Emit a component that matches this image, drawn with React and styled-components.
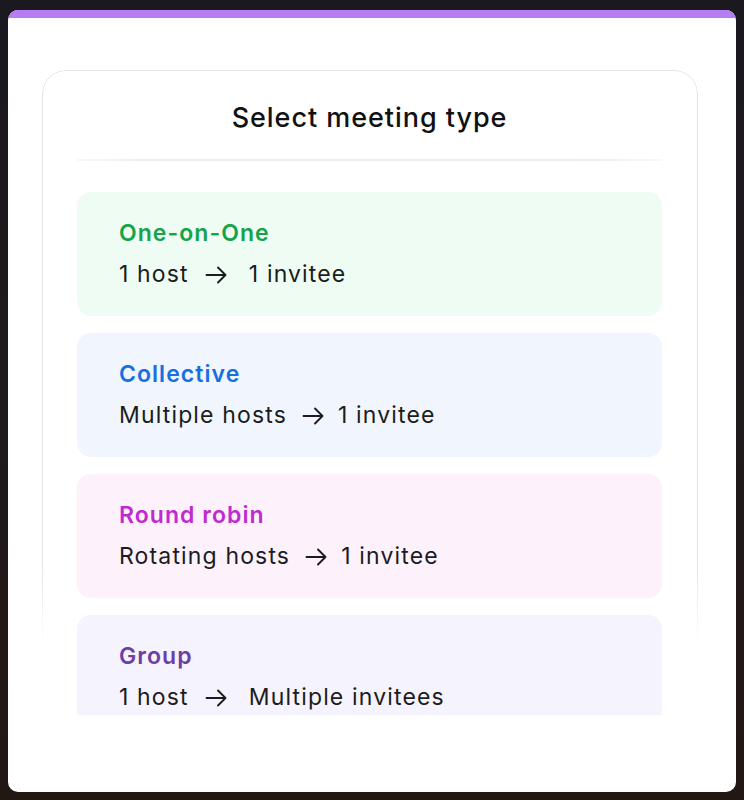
import React from "react";
import styled, { createGlobalStyle } from "styled-components";

const Global = createGlobalStyle`
  html, body { margin: 0; padding: 0; }
  body {
    font-family: Inter, "Noto Sans", sans-serif;
    background: linear-gradient(180deg, #1c1820 0%, #1f1a1c 50%, #231714 100%);
    min-height: 800px;
    -webkit-font-smoothing: antialiased;
  }
  * { box-sizing: border-box; }
`;

const Frame = styled.div`
  padding: 10px 8px 8px 8px;
  height: 800px;
  display: flex;
`;

const Panel = styled.div`
  flex: 1;
  background: #ffffff;
  border-radius: 10px;
  overflow: hidden;
  display: flex;
  flex-direction: column;
`;

const TopBar = styled.div`
  height: 8px;
  background: #b57cf4;
  flex: none;
`;

const Body = styled.div`
  padding: 52px 38px 0 34px;
`;

const Card = styled.div`
  position: relative;
  height: 645px;
  overflow: hidden;
  padding: 0 36px 0 35px;
  &::before {
    content: "";
    position: absolute;
    inset: 0 0 -40px 0;
    border: 1.5px solid #e3e3e3;
    border-radius: 24px;
    pointer-events: none;
    -webkit-mask-image: linear-gradient(180deg, #000 0%, #000 72%, transparent 84%);
    mask-image: linear-gradient(180deg, #000 0%, #000 72%, transparent 84%);
  }
`;

const Title = styled.h1`
  margin: 0;
  padding-top: 32px;
  font-size: 27px;
  line-height: 32px;
  font-weight: 500;
  letter-spacing: 0.95px;
  color: #111111;
  text-align: center;
`;

const Divider = styled.div`
  margin-top: 25px;
  height: 2px;
  background: linear-gradient(90deg, rgba(232,232,232,0.3) 0%, #ececec 15%, #ececec 85%, rgba(232,232,232,0.3) 100%);
`;

const List = styled.div`
  margin-top: 31px;
  display: flex;
  flex-direction: column;
  gap: 17px;
`;

const Option = styled.div`
  height: 124px;
  flex: none;
  border-radius: 14px;
  background: ${(p) => p.$bg};
  padding: 26px 42px 0 42px;
  display: flex;
  flex-direction: column;
  gap: 11px;
`;

const OptionTitle = styled.div`
  font-size: 23px;
  line-height: 30px;
  font-weight: 600;
  letter-spacing: 1.05px;
  color: ${(p) => p.$color};
`;

const Flow = styled.div`
  display: flex;
  align-items: center;
  font-size: 23px;
  line-height: 30px;
  font-weight: 400;
  letter-spacing: 1.15px;
  color: #1c1c1c;
`;

const ArrowIcon = styled.svg`
  flex: none;
  width: 22px;
  height: 18px;
  margin: 1px ${(p) => (p.$wide ? 22 : 14)}px 0 ${(p) => (p.$wide ? 16 : 15)}px;
`;

const Arrow = ({ wide }) => (
  <ArrowIcon $wide={wide} viewBox="0 0 22 18" fill="none" stroke="#1c1c1c" strokeWidth="1.9" strokeLinecap="round" strokeLinejoin="round">
    <path d="M1.5 9H20.5M13 1.5L20.5 9L13 16.5" />
  </ArrowIcon>
);

const options = [
  { title: "One-on-One", from: "1 host", to: "1 invitee", bg: "#effcf3", color: "#16a34a", wide: true },
  { title: "Collective", from: "Multiple hosts", to: "1 invitee", bg: "#f1f6fe", color: "#1a6fdf" },
  { title: "Round robin", from: "Rotating hosts", to: "1 invitee", bg: "#fdf1fc", color: "#c02bd0" },
  { title: "Group", from: "1 host", to: "Multiple invitees", bg: "#f5f3fe", color: "#6c3fa6", wide: true },
];

export default function App() {
  return (
    <>
      <Global />
      <Frame>
        <Panel>
          <TopBar />
          <Body>
            <Card>
              <Title>Select meeting type</Title>
              <Divider />
              <List>
                {options.map((o) => (
                  <Option key={o.title} $bg={o.bg}>
                    <OptionTitle $color={o.color}>{o.title}</OptionTitle>
                    <Flow>
                      <span>{o.from}</span>
                      <Arrow wide={o.wide} />
                      <span>{o.to}</span>
                    </Flow>
                  </Option>
                ))}
              </List>
            </Card>
          </Body>
        </Panel>
      </Frame>
    </>
  );
}
